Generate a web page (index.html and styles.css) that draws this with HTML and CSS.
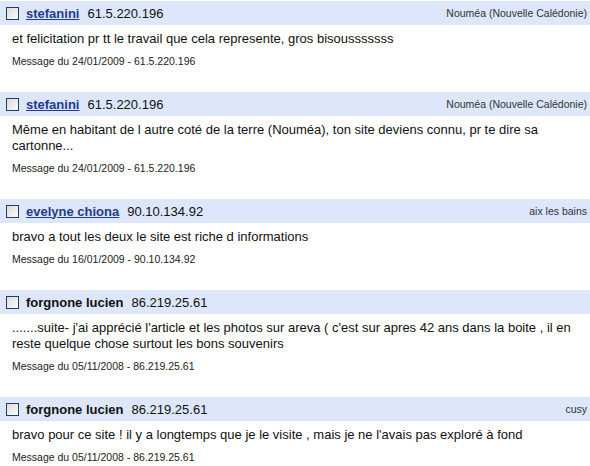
FILE: index.html
```html
<!DOCTYPE html>
<html lang="fr">
<head>
  <meta charset="UTF-8" />
  <title>Livre d'or</title>
  <link rel="stylesheet" href="styles.css">
</head>
<body>
  <div class="messages">

    <div class="message">
      <div class="msg-head">
        <span class="check"></span>
        <a class="author" href="#">stefanini</a>
        <span class="ip">61.5.220.196</span>
        <span class="place">Nouméa (Nouvelle Calédonie)</span>
      </div>
      <p class="msg-body">et felicitation pr tt le travail que cela represente, gros bisousssssss</p>
      <p class="msg-meta">Message du 24/01/2009 - 61.5.220.196</p>
    </div>

    <div class="message">
      <div class="msg-head">
        <span class="check"></span>
        <a class="author" href="#">stefanini</a>
        <span class="ip">61.5.220.196</span>
        <span class="place">Nouméa (Nouvelle Calédonie)</span>
      </div>
      <p class="msg-body">Même en habitant de l autre coté de la terre (Nouméa), ton site deviens connu, pr te dire sa cartonne...</p>
      <p class="msg-meta">Message du 24/01/2009 - 61.5.220.196</p>
    </div>

    <div class="message">
      <div class="msg-head">
        <span class="check"></span>
        <a class="author" href="#">evelyne chiona</a>
        <span class="ip">90.10.134.92</span>
        <span class="place">aix les bains</span>
      </div>
      <p class="msg-body">bravo a tout les deux le site est riche d informations</p>
      <p class="msg-meta">Message du 16/01/2009 - 90.10.134.92</p>
    </div>

    <div class="message">
      <div class="msg-head">
        <span class="check"></span>
        <span class="author plain">forgnone lucien</span>
        <span class="ip">86.219.25.61</span>
        <span class="place"></span>
      </div>
      <p class="msg-body">.......suite- j'ai apprécié l'article et les photos sur areva ( c'est sur apres 42 ans dans la boite , il en reste quelque chose surtout les bons souvenirs</p>
      <p class="msg-meta">Message du 05/11/2008 - 86.219.25.61</p>
    </div>

    <div class="message">
      <div class="msg-head">
        <span class="check"></span>
        <span class="author plain">forgnone lucien</span>
        <span class="ip">86.219.25.61</span>
        <span class="place">cusy</span>
      </div>
      <p class="msg-body">bravo pour ce site ! il y a longtemps que je le visite , mais je ne l'avais pas exploré à fond</p>
      <p class="msg-meta">Message du 05/11/2008 - 86.219.25.61</p>
    </div>

  </div>
</body>
</html>
```

FILE: styles.css
```css
* {
  margin: 0; padding: 0; box-sizing: border-box;
}
body {
  font-family: 'Liberation Sans', Arial, sans-serif;
  background: #fff;
  color: #111;
  padding-top: 1px;
}
.message {
  margin-bottom: 24px;
}
.msg-head {
  display: flex;
  align-items: center;
  height: 24px;
  padding: 0 3px 0 6px;
  background: #dde6fa;
  font-size: 13px;
}
.check {
  width: 13px;
  height: 13px;
  border: 1px solid #1f3c6a;
  background: linear-gradient(135deg, #dcdcd6, #fbfbf9);
  margin-right: 7px;
}
.author {
  font-weight: bold;
  color: #1d3a8f;
  text-decoration: underline;
}
.author.plain {
  color: #111;
  text-decoration: none;
}
.ip {
  margin-left: 8px;
}
.place {
  margin-left: auto;
  font-size: 10.5px;
  color: #333;
}
.msg-body {
  padding: 6px 12px 0;
  font-size: 13px;
  line-height: 16px;
}
.msg-meta {
  margin-top: 7px;
  padding: 0 12px;
  font-size: 10.5px;
  line-height: 14px;
  color: #222;
}
```
